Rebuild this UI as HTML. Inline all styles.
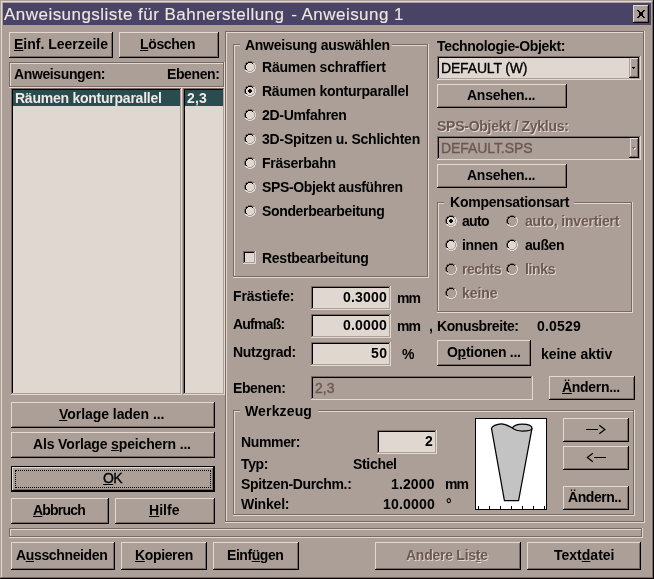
<!DOCTYPE html>
<html lang="de"><head><meta charset="utf-8"><title>Anweisungsliste für Bahnerstellung - Anweisung 1</title>
<style>
html,body{margin:0;padding:0}
body{width:654px;height:579px;background:#ab9f97;position:relative;overflow:hidden;font-family:"Liberation Sans",sans-serif;}
body>div,body>svg{position:absolute;box-sizing:border-box}
.t{will-change:transform;font-weight:bold;font-size:14px;line-height:16px;height:16px;white-space:nowrap;color:#000}
.t.n{font-weight:normal;-webkit-text-stroke:0.35px currentColor}
.t.w{color:#f2eae2}
.t.ti{-webkit-text-stroke:0.12px currentColor;color:#f0e8e0;line-height:20px;height:20px}
.t.dd{color:#6c5852}
.t.dl{color:#e2dad2}
.t u{text-decoration:underline;text-underline-offset:1px;text-decoration-thickness:1px}
.btn{background:#ab9f97;box-shadow:inset -1px -1px 0 #000,inset 1px 1px 0 #e2dad2,inset -2px -2px 0 #7a6862}
.btn.b2{box-shadow:inset -1px -1px 0 #000,inset 1px 0 0 #ab9f97,inset 0 1px 0 #e2dad2,inset -2px -2px 0 #7a6862,inset 2px 0 0 #e2dad2}
.btn.def{box-shadow:inset 0 0 0 1px #000,inset -2px -2px 0 #000,inset 2px 2px 0 #e2dad2,inset -3px -3px 0 #7a6862}
.et{box-shadow:inset -1px -1px 0 #e2dad2,inset 1px 1px 0 #7a6862,inset -2px -2px 0 #7a6862,inset 2px 2px 0 #e2dad2}
.sk{box-shadow:inset -1px -1px 0 #e2dad2,inset 1px 1px 0 #7a6862,inset -2px -2px 0 #ab9f97,inset 2px 2px 0 #000}
.focus{border:1px dotted #000}
</style></head>
<body>
<div style="left:1px;top:1px;width:652px;height:1px;background:#e2dad2;"></div>
<div style="left:1px;top:1px;width:1px;height:577px;background:#e2dad2;"></div>
<div style="left:652px;top:1px;width:1px;height:577px;background:#7a6862;"></div>
<div style="left:1px;top:577px;width:652px;height:1px;background:#7a6862;"></div>
<div style="left:653px;top:0px;width:1px;height:579px;background:#000;"></div>
<div style="left:0px;top:578px;width:654px;height:1px;background:#000;"></div>
<div style="left:3px;top:3px;width:648px;height:22px;background:#494366;"></div>
<div class="t n ti" style="left:4px;top:5px;letter-spacing:0.466px;font-size:17px;">Anweisungsliste für Bahnerstellung <span style="margin-left:1.5px">- Anweisung 1</span></div>
<div class="btn" style="left:633px;top:5px;width:16px;height:18px"></div>
<svg style="left:637px;top:10px" width="8" height="8" viewBox="0 0 8 8" shape-rendering="crispEdges"><path d="M0 0h2v1h-2zM6 0h2v1h-2zM1 1h2v1h-2zM5 1h2v1h-2zM2 2h4v4h-4zM1 6h2v1h-2zM5 6h2v1h-2zM0 7h2v1h-2zM6 7h2v1h-2z" fill="#000"/></svg>
<div class="btn" style="left:9px;top:32px;width:104px;height:26px"></div>
<div class="t " style="left:14px;top:36px;letter-spacing:-0.011px;"><u>E</u>inf. Leerzeile</div>
<div class="btn" style="left:119px;top:32px;width:100px;height:26px"></div>
<div class="t " style="left:140px;top:36px;letter-spacing:-0.346px;"><u>L</u>öschen</div>
<div class="et" style="left:9px;top:62px;width:216px;height:26px"></div>
<div class="t " style="left:14px;top:66px;letter-spacing:-0.379px;">Anweisungen:</div>
<div class="t " style="left:167px;top:66px;letter-spacing:-0.389px;">Ebenen:</div>
<div class="sk" style="left:11px;top:88px;width:171px;height:307px;background:#e0d8d0"></div>
<div class="sk" style="left:183px;top:88px;width:42px;height:307px;background:#e0d8d0"></div>
<div style="left:13px;top:90px;width:167px;height:16px;background:#284c50;"></div>
<div style="left:185px;top:90px;width:38px;height:16px;background:#284c50;"></div>
<div class="t w" style="left:15px;top:90px;letter-spacing:-0.240px;">Räumen konturparallel</div>
<div class="t w" style="left:187px;top:90px;letter-spacing:0.216px;">2,3</div>
<div class="btn" style="left:11px;top:402px;width:204px;height:26px"></div>
<div class="t " style="left:59px;top:406px;letter-spacing:-0.052px;"><u>V</u>orlage laden ...</div>
<div class="btn" style="left:11px;top:432px;width:204px;height:26px"></div>
<div class="t " style="left:33px;top:436px;letter-spacing:-0.149px;">Als Vorlage <u>s</u>peichern ...</div>
<div class="btn def" style="left:11px;top:466px;width:204px;height:26px"></div>
<div class="t n" style="left:103px;top:470px;letter-spacing:-0.734px;"><u>O</u>K</div>
<div class="focus" style="left:15px;top:470px;width:196px;height:18px"></div>
<div class="btn" style="left:11px;top:498px;width:98px;height:26px"></div>
<div class="t " style="left:33px;top:502px;letter-spacing:-0.794px;"><u>A</u>bbruch</div>
<div class="btn" style="left:115px;top:498px;width:100px;height:26px"></div>
<div class="t " style="left:149px;top:502px;letter-spacing:0.039px;"><u>H</u>ilfe</div>
<div class="et" style="left:9px;top:528px;width:634px;height:10px"></div>
<div class="btn" style="left:11px;top:542px;width:104px;height:28px"></div>
<div class="t " style="left:16px;top:547px;letter-spacing:-0.355px;">A<u>u</u>sschneiden</div>
<div class="btn" style="left:121px;top:542px;width:86px;height:28px"></div>
<div class="t " style="left:135px;top:547px;letter-spacing:-0.355px;"><u>K</u>opieren</div>
<div class="btn" style="left:213px;top:542px;width:86px;height:28px"></div>
<div class="t " style="left:227px;top:547px;letter-spacing:-0.427px;">Einf<u>ü</u>gen</div>
<div class="btn" style="left:375px;top:542px;width:146px;height:28px"></div>
<div class="t dl" style="left:407.3px;top:548px;letter-spacing:-0.256px;">Andere Lis<u>t</u>e</div>
<div class="t dd" style="left:406.3px;top:547px;letter-spacing:-0.256px;">Andere Lis<u>t</u>e</div>
<div class="btn" style="left:527px;top:542px;width:114px;height:28px"></div>
<div class="t " style="left:553.6px;top:547px;letter-spacing:0.008px;">Text<u>d</u>atei</div>
<div class="et" style="left:225px;top:31px;width:420px;height:492px"></div>
<div class="et" style="left:233px;top:44px;width:196px;height:234px"></div>
<div style="left:240px;top:44px;width:152px;height:2px;background:#ab9f97;"></div>
<div class="t " style="left:245px;top:37px;letter-spacing:-0.286px;">Anweisung auswählen</div>
<svg class="rd" style="left:244px;top:61px" width="12" height="12" viewBox="0 0 12 12" shape-rendering="crispEdges">
<path d="M4 0h4v1h2v1h1v2h1v4h-1v2h-1v1h-2v1h-4v-1h-2v-1h-1v-2h-1v-4h1v-2h1v-1h2z" fill="#e0d8d0"/>
<path d="M4 0h4v1h-4zM2 1h2v1h-2zM8 1h2v1h-2zM1 2h1v2h-1zM0 4h1v4h-1zM1 8h1v1h-1z" fill="#7a6862"/>
<path d="M4 1h4v1h-4zM2 2h2v1h-2zM8 2h1v1h-1zM2 3h1v1h-1zM1 4h1v4h-1zM2 8h1v1h-1z" fill="#000"/>
<path d="M10 2h1v2h-1zM11 4h1v4h-1zM10 8h1v2h-1zM8 10h2v1h-2zM4 11h4v1h-4zM2 10h2v1h-2zM1 9h1v1h-1z" fill="#e2dad2"/>
<path d="M9 3h1v1h-1zM10 4h1v4h-1zM9 8h1v1h-1zM8 9h1v1h-1zM4 10h4v1h-4zM3 9h1v1h-1z" fill="#ab9f97"/>
</svg>
<div class="t " style="left:262px;top:59px;letter-spacing:-0.223px;">Räumen schraffiert</div>
<svg class="rd" style="left:244px;top:85px" width="12" height="12" viewBox="0 0 12 12" shape-rendering="crispEdges">
<path d="M4 0h4v1h2v1h1v2h1v4h-1v2h-1v1h-2v1h-4v-1h-2v-1h-1v-2h-1v-4h1v-2h1v-1h2z" fill="#e0d8d0"/>
<path d="M4 0h4v1h-4zM2 1h2v1h-2zM8 1h2v1h-2zM1 2h1v2h-1zM0 4h1v4h-1zM1 8h1v1h-1z" fill="#7a6862"/>
<path d="M4 1h4v1h-4zM2 2h2v1h-2zM8 2h1v1h-1zM2 3h1v1h-1zM1 4h1v4h-1zM2 8h1v1h-1z" fill="#000"/>
<path d="M10 2h1v2h-1zM11 4h1v4h-1zM10 8h1v2h-1zM8 10h2v1h-2zM4 11h4v1h-4zM2 10h2v1h-2zM1 9h1v1h-1z" fill="#e2dad2"/>
<path d="M9 3h1v1h-1zM10 4h1v4h-1zM9 8h1v1h-1zM8 9h1v1h-1zM4 10h4v1h-4zM3 9h1v1h-1z" fill="#ab9f97"/>
<path d="M5 4h2v1h1v2h-1v1h-2v-1h-1v-2h1z" fill="#000"/></svg>
<div class="t " style="left:262px;top:83px;letter-spacing:-0.240px;">Räumen konturparallel</div>
<svg class="rd" style="left:244px;top:109px" width="12" height="12" viewBox="0 0 12 12" shape-rendering="crispEdges">
<path d="M4 0h4v1h2v1h1v2h1v4h-1v2h-1v1h-2v1h-4v-1h-2v-1h-1v-2h-1v-4h1v-2h1v-1h2z" fill="#e0d8d0"/>
<path d="M4 0h4v1h-4zM2 1h2v1h-2zM8 1h2v1h-2zM1 2h1v2h-1zM0 4h1v4h-1zM1 8h1v1h-1z" fill="#7a6862"/>
<path d="M4 1h4v1h-4zM2 2h2v1h-2zM8 2h1v1h-1zM2 3h1v1h-1zM1 4h1v4h-1zM2 8h1v1h-1z" fill="#000"/>
<path d="M10 2h1v2h-1zM11 4h1v4h-1zM10 8h1v2h-1zM8 10h2v1h-2zM4 11h4v1h-4zM2 10h2v1h-2zM1 9h1v1h-1z" fill="#e2dad2"/>
<path d="M9 3h1v1h-1zM10 4h1v4h-1zM9 8h1v1h-1zM8 9h1v1h-1zM4 10h4v1h-4zM3 9h1v1h-1z" fill="#ab9f97"/>
</svg>
<div class="t " style="left:262px;top:107px;letter-spacing:-0.301px;">2D-Umfahren</div>
<svg class="rd" style="left:244px;top:133px" width="12" height="12" viewBox="0 0 12 12" shape-rendering="crispEdges">
<path d="M4 0h4v1h2v1h1v2h1v4h-1v2h-1v1h-2v1h-4v-1h-2v-1h-1v-2h-1v-4h1v-2h1v-1h2z" fill="#e0d8d0"/>
<path d="M4 0h4v1h-4zM2 1h2v1h-2zM8 1h2v1h-2zM1 2h1v2h-1zM0 4h1v4h-1zM1 8h1v1h-1z" fill="#7a6862"/>
<path d="M4 1h4v1h-4zM2 2h2v1h-2zM8 2h1v1h-1zM2 3h1v1h-1zM1 4h1v4h-1zM2 8h1v1h-1z" fill="#000"/>
<path d="M10 2h1v2h-1zM11 4h1v4h-1zM10 8h1v2h-1zM8 10h2v1h-2zM4 11h4v1h-4zM2 10h2v1h-2zM1 9h1v1h-1z" fill="#e2dad2"/>
<path d="M9 3h1v1h-1zM10 4h1v4h-1zM9 8h1v1h-1zM8 9h1v1h-1zM4 10h4v1h-4zM3 9h1v1h-1z" fill="#ab9f97"/>
</svg>
<div class="t " style="left:262px;top:131px;letter-spacing:-0.224px;">3D-Spitzen u. Schlichten</div>
<svg class="rd" style="left:244px;top:157px" width="12" height="12" viewBox="0 0 12 12" shape-rendering="crispEdges">
<path d="M4 0h4v1h2v1h1v2h1v4h-1v2h-1v1h-2v1h-4v-1h-2v-1h-1v-2h-1v-4h1v-2h1v-1h2z" fill="#e0d8d0"/>
<path d="M4 0h4v1h-4zM2 1h2v1h-2zM8 1h2v1h-2zM1 2h1v2h-1zM0 4h1v4h-1zM1 8h1v1h-1z" fill="#7a6862"/>
<path d="M4 1h4v1h-4zM2 2h2v1h-2zM8 2h1v1h-1zM2 3h1v1h-1zM1 4h1v4h-1zM2 8h1v1h-1z" fill="#000"/>
<path d="M10 2h1v2h-1zM11 4h1v4h-1zM10 8h1v2h-1zM8 10h2v1h-2zM4 11h4v1h-4zM2 10h2v1h-2zM1 9h1v1h-1z" fill="#e2dad2"/>
<path d="M9 3h1v1h-1zM10 4h1v4h-1zM9 8h1v1h-1zM8 9h1v1h-1zM4 10h4v1h-4zM3 9h1v1h-1z" fill="#ab9f97"/>
</svg>
<div class="t " style="left:262px;top:155px;letter-spacing:-0.250px;">Fräserbahn</div>
<svg class="rd" style="left:244px;top:181px" width="12" height="12" viewBox="0 0 12 12" shape-rendering="crispEdges">
<path d="M4 0h4v1h2v1h1v2h1v4h-1v2h-1v1h-2v1h-4v-1h-2v-1h-1v-2h-1v-4h1v-2h1v-1h2z" fill="#e0d8d0"/>
<path d="M4 0h4v1h-4zM2 1h2v1h-2zM8 1h2v1h-2zM1 2h1v2h-1zM0 4h1v4h-1zM1 8h1v1h-1z" fill="#7a6862"/>
<path d="M4 1h4v1h-4zM2 2h2v1h-2zM8 2h1v1h-1zM2 3h1v1h-1zM1 4h1v4h-1zM2 8h1v1h-1z" fill="#000"/>
<path d="M10 2h1v2h-1zM11 4h1v4h-1zM10 8h1v2h-1zM8 10h2v1h-2zM4 11h4v1h-4zM2 10h2v1h-2zM1 9h1v1h-1z" fill="#e2dad2"/>
<path d="M9 3h1v1h-1zM10 4h1v4h-1zM9 8h1v1h-1zM8 9h1v1h-1zM4 10h4v1h-4zM3 9h1v1h-1z" fill="#ab9f97"/>
</svg>
<div class="t " style="left:262px;top:179px;letter-spacing:-0.353px;">SPS-Objekt ausführen</div>
<svg class="rd" style="left:244px;top:205px" width="12" height="12" viewBox="0 0 12 12" shape-rendering="crispEdges">
<path d="M4 0h4v1h2v1h1v2h1v4h-1v2h-1v1h-2v1h-4v-1h-2v-1h-1v-2h-1v-4h1v-2h1v-1h2z" fill="#e0d8d0"/>
<path d="M4 0h4v1h-4zM2 1h2v1h-2zM8 1h2v1h-2zM1 2h1v2h-1zM0 4h1v4h-1zM1 8h1v1h-1z" fill="#7a6862"/>
<path d="M4 1h4v1h-4zM2 2h2v1h-2zM8 2h1v1h-1zM2 3h1v1h-1zM1 4h1v4h-1zM2 8h1v1h-1z" fill="#000"/>
<path d="M10 2h1v2h-1zM11 4h1v4h-1zM10 8h1v2h-1zM8 10h2v1h-2zM4 11h4v1h-4zM2 10h2v1h-2zM1 9h1v1h-1z" fill="#e2dad2"/>
<path d="M9 3h1v1h-1zM10 4h1v4h-1zM9 8h1v1h-1zM8 9h1v1h-1zM4 10h4v1h-4zM3 9h1v1h-1z" fill="#ab9f97"/>
</svg>
<div class="t " style="left:262px;top:203px;letter-spacing:-0.347px;">Sonderbearbeitung</div>
<div class="sk" style="left:243px;top:251px;width:13px;height:13px;background:#e0d8d0"></div>
<div class="t " style="left:262px;top:250px;letter-spacing:-0.262px;">Restbearbeitung</div>
<div class="t " style="left:437px;top:38px;letter-spacing:-0.323px;">Technologie-Objekt:</div>
<div class="sk" style="left:437px;top:56px;width:204px;height:24px;background:#e0d8d0"></div>
<div class="t n" style="left:441px;top:60px;letter-spacing:-0.166px;">DEFAULT (W)</div>
<div class="btn b2" style="left:629px;top:58px;width:10px;height:20px"></div>
<div style="left:632px;top:67px;width:3px;height:1px;background:#000;"></div>
<div style="left:633px;top:68px;width:1px;height:1px;background:#000;"></div>
<div class="btn" style="left:437px;top:84px;width:130px;height:24px"></div>
<div class="t " style="left:467px;top:87px;letter-spacing:-0.255px;">Ansehen...</div>
<div class="t dl" style="left:438px;top:119px;letter-spacing:-0.260px;">SPS-Objekt / Zyklus:</div>
<div class="t dd" style="left:437px;top:118px;letter-spacing:-0.260px;">SPS-Objekt / Zyklus:</div>
<div class="sk" style="left:437px;top:136px;width:204px;height:24px;background:#ab9f97"></div>
<div class="t n dd" style="left:441px;top:140px;letter-spacing:-0.083px;">DEFAULT.SPS</div>
<div class="btn b2" style="left:629px;top:138px;width:10px;height:20px"></div>
<div style="left:633px;top:148px;width:3px;height:1px;background:#e2dad2;"></div>
<div style="left:634px;top:149px;width:1px;height:1px;background:#e2dad2;"></div>
<div style="left:632px;top:147px;width:3px;height:1px;background:#7a6862;"></div>
<div style="left:633px;top:148px;width:1px;height:1px;background:#7a6862;"></div>
<div class="btn" style="left:437px;top:164px;width:130px;height:24px"></div>
<div class="t " style="left:467px;top:167px;letter-spacing:-0.255px;">Ansehen...</div>
<div class="et" style="left:437px;top:202px;width:196px;height:111px"></div>
<div style="left:444px;top:202px;width:130px;height:2px;background:#ab9f97;"></div>
<div class="t " style="left:449.5px;top:194px;letter-spacing:-0.228px;">Kompensationsart</div>
<svg class="rd" style="left:445px;top:215px" width="12" height="12" viewBox="0 0 12 12" shape-rendering="crispEdges">
<path d="M4 0h4v1h2v1h1v2h1v4h-1v2h-1v1h-2v1h-4v-1h-2v-1h-1v-2h-1v-4h1v-2h1v-1h2z" fill="#e0d8d0"/>
<path d="M4 0h4v1h-4zM2 1h2v1h-2zM8 1h2v1h-2zM1 2h1v2h-1zM0 4h1v4h-1zM1 8h1v1h-1z" fill="#7a6862"/>
<path d="M4 1h4v1h-4zM2 2h2v1h-2zM8 2h1v1h-1zM2 3h1v1h-1zM1 4h1v4h-1zM2 8h1v1h-1z" fill="#000"/>
<path d="M10 2h1v2h-1zM11 4h1v4h-1zM10 8h1v2h-1zM8 10h2v1h-2zM4 11h4v1h-4zM2 10h2v1h-2zM1 9h1v1h-1z" fill="#e2dad2"/>
<path d="M9 3h1v1h-1zM10 4h1v4h-1zM9 8h1v1h-1zM8 9h1v1h-1zM4 10h4v1h-4zM3 9h1v1h-1z" fill="#ab9f97"/>
<path d="M5 4h2v1h1v2h-1v1h-2v-1h-1v-2h1z" fill="#000"/></svg>
<div class="t " style="left:462px;top:213px;letter-spacing:-0.688px;">auto</div>
<svg class="rd" style="left:506px;top:215px" width="12" height="12" viewBox="0 0 12 12" shape-rendering="crispEdges">
<path d="M4 0h4v1h2v1h1v2h1v4h-1v2h-1v1h-2v1h-4v-1h-2v-1h-1v-2h-1v-4h1v-2h1v-1h2z" fill="#ab9f97"/>
<path d="M4 0h4v1h-4zM2 1h2v1h-2zM8 1h2v1h-2zM1 2h1v2h-1zM0 4h1v4h-1zM1 8h1v1h-1z" fill="#7a6862"/>
<path d="M4 1h4v1h-4zM2 2h2v1h-2zM8 2h1v1h-1zM2 3h1v1h-1zM1 4h1v4h-1zM2 8h1v1h-1z" fill="#000"/>
<path d="M10 2h1v2h-1zM11 4h1v4h-1zM10 8h1v2h-1zM8 10h2v1h-2zM4 11h4v1h-4zM2 10h2v1h-2zM1 9h1v1h-1z" fill="#e2dad2"/>
<path d="M9 3h1v1h-1zM10 4h1v4h-1zM9 8h1v1h-1zM8 9h1v1h-1zM4 10h4v1h-4zM3 9h1v1h-1z" fill="#ab9f97"/>
</svg>
<div class="t dl" style="left:525.5px;top:214px;letter-spacing:-0.183px;">auto, invertiert</div>
<div class="t dd" style="left:524.5px;top:213px;letter-spacing:-0.183px;">auto, invertiert</div>
<svg class="rd" style="left:445px;top:239px" width="12" height="12" viewBox="0 0 12 12" shape-rendering="crispEdges">
<path d="M4 0h4v1h2v1h1v2h1v4h-1v2h-1v1h-2v1h-4v-1h-2v-1h-1v-2h-1v-4h1v-2h1v-1h2z" fill="#e0d8d0"/>
<path d="M4 0h4v1h-4zM2 1h2v1h-2zM8 1h2v1h-2zM1 2h1v2h-1zM0 4h1v4h-1zM1 8h1v1h-1z" fill="#7a6862"/>
<path d="M4 1h4v1h-4zM2 2h2v1h-2zM8 2h1v1h-1zM2 3h1v1h-1zM1 4h1v4h-1zM2 8h1v1h-1z" fill="#000"/>
<path d="M10 2h1v2h-1zM11 4h1v4h-1zM10 8h1v2h-1zM8 10h2v1h-2zM4 11h4v1h-4zM2 10h2v1h-2zM1 9h1v1h-1z" fill="#e2dad2"/>
<path d="M9 3h1v1h-1zM10 4h1v4h-1zM9 8h1v1h-1zM8 9h1v1h-1zM4 10h4v1h-4zM3 9h1v1h-1z" fill="#ab9f97"/>
</svg>
<div class="t " style="left:462px;top:237px;letter-spacing:-0.336px;">innen</div>
<svg class="rd" style="left:506px;top:239px" width="12" height="12" viewBox="0 0 12 12" shape-rendering="crispEdges">
<path d="M4 0h4v1h2v1h1v2h1v4h-1v2h-1v1h-2v1h-4v-1h-2v-1h-1v-2h-1v-4h1v-2h1v-1h2z" fill="#e0d8d0"/>
<path d="M4 0h4v1h-4zM2 1h2v1h-2zM8 1h2v1h-2zM1 2h1v2h-1zM0 4h1v4h-1zM1 8h1v1h-1z" fill="#7a6862"/>
<path d="M4 1h4v1h-4zM2 2h2v1h-2zM8 2h1v1h-1zM2 3h1v1h-1zM1 4h1v4h-1zM2 8h1v1h-1z" fill="#000"/>
<path d="M10 2h1v2h-1zM11 4h1v4h-1zM10 8h1v2h-1zM8 10h2v1h-2zM4 11h4v1h-4zM2 10h2v1h-2zM1 9h1v1h-1z" fill="#e2dad2"/>
<path d="M9 3h1v1h-1zM10 4h1v4h-1zM9 8h1v1h-1zM8 9h1v1h-1zM4 10h4v1h-4zM3 9h1v1h-1z" fill="#ab9f97"/>
</svg>
<div class="t " style="left:524.5px;top:237px;letter-spacing:-0.434px;">außen</div>
<svg class="rd" style="left:445px;top:263px" width="12" height="12" viewBox="0 0 12 12" shape-rendering="crispEdges">
<path d="M4 0h4v1h2v1h1v2h1v4h-1v2h-1v1h-2v1h-4v-1h-2v-1h-1v-2h-1v-4h1v-2h1v-1h2z" fill="#ab9f97"/>
<path d="M4 0h4v1h-4zM2 1h2v1h-2zM8 1h2v1h-2zM1 2h1v2h-1zM0 4h1v4h-1zM1 8h1v1h-1z" fill="#7a6862"/>
<path d="M4 1h4v1h-4zM2 2h2v1h-2zM8 2h1v1h-1zM2 3h1v1h-1zM1 4h1v4h-1zM2 8h1v1h-1z" fill="#000"/>
<path d="M10 2h1v2h-1zM11 4h1v4h-1zM10 8h1v2h-1zM8 10h2v1h-2zM4 11h4v1h-4zM2 10h2v1h-2zM1 9h1v1h-1z" fill="#e2dad2"/>
<path d="M9 3h1v1h-1zM10 4h1v4h-1zM9 8h1v1h-1zM8 9h1v1h-1zM4 10h4v1h-4zM3 9h1v1h-1z" fill="#ab9f97"/>
</svg>
<div class="t dl" style="left:463px;top:262px;letter-spacing:-0.506px;">rechts</div>
<div class="t dd" style="left:462px;top:261px;letter-spacing:-0.506px;">rechts</div>
<svg class="rd" style="left:506px;top:263px" width="12" height="12" viewBox="0 0 12 12" shape-rendering="crispEdges">
<path d="M4 0h4v1h2v1h1v2h1v4h-1v2h-1v1h-2v1h-4v-1h-2v-1h-1v-2h-1v-4h1v-2h1v-1h2z" fill="#ab9f97"/>
<path d="M4 0h4v1h-4zM2 1h2v1h-2zM8 1h2v1h-2zM1 2h1v2h-1zM0 4h1v4h-1zM1 8h1v1h-1z" fill="#7a6862"/>
<path d="M4 1h4v1h-4zM2 2h2v1h-2zM8 2h1v1h-1zM2 3h1v1h-1zM1 4h1v4h-1zM2 8h1v1h-1z" fill="#000"/>
<path d="M10 2h1v2h-1zM11 4h1v4h-1zM10 8h1v2h-1zM8 10h2v1h-2zM4 11h4v1h-4zM2 10h2v1h-2zM1 9h1v1h-1z" fill="#e2dad2"/>
<path d="M9 3h1v1h-1zM10 4h1v4h-1zM9 8h1v1h-1zM8 9h1v1h-1zM4 10h4v1h-4zM3 9h1v1h-1z" fill="#ab9f97"/>
</svg>
<div class="t dl" style="left:525.5px;top:262px;letter-spacing:-0.352px;">links</div>
<div class="t dd" style="left:524.5px;top:261px;letter-spacing:-0.352px;">links</div>
<svg class="rd" style="left:445px;top:287px" width="12" height="12" viewBox="0 0 12 12" shape-rendering="crispEdges">
<path d="M4 0h4v1h2v1h1v2h1v4h-1v2h-1v1h-2v1h-4v-1h-2v-1h-1v-2h-1v-4h1v-2h1v-1h2z" fill="#ab9f97"/>
<path d="M4 0h4v1h-4zM2 1h2v1h-2zM8 1h2v1h-2zM1 2h1v2h-1zM0 4h1v4h-1zM1 8h1v1h-1z" fill="#7a6862"/>
<path d="M4 1h4v1h-4zM2 2h2v1h-2zM8 2h1v1h-1zM2 3h1v1h-1zM1 4h1v4h-1zM2 8h1v1h-1z" fill="#000"/>
<path d="M10 2h1v2h-1zM11 4h1v4h-1zM10 8h1v2h-1zM8 10h2v1h-2zM4 11h4v1h-4zM2 10h2v1h-2zM1 9h1v1h-1z" fill="#e2dad2"/>
<path d="M9 3h1v1h-1zM10 4h1v4h-1zM9 8h1v1h-1zM8 9h1v1h-1zM4 10h4v1h-4zM3 9h1v1h-1z" fill="#ab9f97"/>
</svg>
<div class="t dl" style="left:463px;top:286px;letter-spacing:-0.078px;">keine</div>
<div class="t dd" style="left:462px;top:285px;letter-spacing:-0.078px;">keine</div>
<div class="t " style="left:233px;top:288px;letter-spacing:-0.170px;">Frästiefe:</div>
<div class="t " style="left:233px;top:316px;letter-spacing:-0.780px;">Aufmaß:</div>
<div class="t " style="left:233px;top:344px;letter-spacing:-0.279px;">Nutzgrad:</div>
<div class="sk" style="left:311px;top:286px;width:80px;height:24px;background:#e0d8d0"></div>
<div class="sk" style="left:311px;top:314px;width:80px;height:24px;background:#e0d8d0"></div>
<div class="sk" style="left:311px;top:342px;width:80px;height:24px;background:#e0d8d0"></div>
<div class="t " style="left:343px;top:289px;letter-spacing:0.174px;">0.3000</div>
<div class="t " style="left:343px;top:317px;letter-spacing:0.174px;">0.0000</div>
<div class="t " style="left:370.6px;top:345px;letter-spacing:0.522px;">50</div>
<div class="t " style="left:397px;top:290px;letter-spacing:-1.006px;">mm</div>
<div class="t " style="left:397px;top:318px;letter-spacing:-1.006px;">mm</div>
<div class="t " style="left:402px;top:346px;letter-spacing:0.547px;">%</div>
<div class="t " style="left:428.8px;top:318px;">,</div>
<div class="t " style="left:437.3px;top:318px;letter-spacing:-0.395px;">Konusbreite:</div>
<div class="t " style="left:536.7px;top:318px;letter-spacing:0.214px;">0.0529</div>
<div class="btn" style="left:437px;top:340px;width:94px;height:26px"></div>
<div class="t " style="left:446.8px;top:344px;letter-spacing:-0.282px;">O<u>p</u>tionen ...</div>
<div class="t " style="left:540.5px;top:346px;letter-spacing:-0.041px;">keine aktiv</div>
<div class="t " style="left:233px;top:380px;letter-spacing:-0.389px;">Ebenen:</div>
<div class="sk" style="left:311px;top:376px;width:222px;height:24px;background:#ab9f97"></div>
<div class="t n dd" style="left:315px;top:380px;letter-spacing:0.016px;">2,3</div>
<div class="btn" style="left:549px;top:376px;width:86px;height:24px"></div>
<div class="t " style="left:561.6px;top:379px;letter-spacing:-0.309px;"><u>Ä</u>ndern...</div>
<div class="et" style="left:233px;top:410px;width:402px;height:106px"></div>
<div style="left:240px;top:410px;width:78px;height:2px;background:#ab9f97;"></div>
<div class="t " style="left:245px;top:403px;letter-spacing:0.146px;">Werkzeug</div>
<div class="t " style="left:241px;top:434px;letter-spacing:-0.345px;">Nummer:</div>
<div class="sk" style="left:377px;top:430px;width:60px;height:24px;background:#e0d8d0"></div>
<div class="t " style="left:424.5px;top:433px;letter-spacing:0.703px;">2</div>
<div class="t " style="left:241px;top:456px;letter-spacing:-0.339px;">Typ:</div>
<div class="t " style="left:353px;top:456px;letter-spacing:-0.318px;">Stichel</div>
<div class="t " style="left:241px;top:476px;letter-spacing:-0.339px;">Spitzen-Durchm.:</div>
<div class="t " style="left:391.2px;top:476px;letter-spacing:0.134px;">1.2000</div>
<div class="t " style="left:445px;top:476px;letter-spacing:-1.006px;">mm</div>
<div class="t " style="left:241px;top:496px;letter-spacing:-0.193px;">Winkel:</div>
<div class="t " style="left:382.8px;top:496px;letter-spacing:0.215px;">10.0000</div>
<div class="t " style="left:446px;top:496px;">°</div>
<svg style="left:475px;top:418px" width="72" height="92" viewBox="0 0 72 92">
<rect x="0.5" y="0.5" width="71" height="91" fill="#fff" stroke="#000" stroke-width="1"/>
<path d="M3.5 88v3M14.5 88v3M25.5 88v3M36.5 88v3M47.5 88v3M58.5 88v3M69.5 88v3" stroke="#000" stroke-width="1" shape-rendering="crispEdges"/>
<path d="M16.5 10.3 C16.8 8.6 21.5 5.8 26.5 5.8 C30.8 5.8 33.8 8.2 37.3 9.9 C39 7.4 43 6 47.2 6 C52.6 6 57 7.6 57 10.2 L43.6 82.5 L29.4 82.5 Z" fill="#c3c3c3" stroke="#000" stroke-width="1.25" stroke-linejoin="round"/>
<path d="M37.3 9.9 C39.5 11.8 43 13 47.2 13 C52.6 13 57 12 57 10.2" fill="none" stroke="#000" stroke-width="1.25"/>
</svg>
<div class="btn" style="left:563px;top:418px;width:66px;height:24px"></div>
<div class="btn" style="left:563px;top:446px;width:66px;height:24px"></div>
<svg style="left:586px;top:424px" width="21" height="11" viewBox="0 0 21 11"><path d="M0 5.5H12M13.3 1.2L18.9 5.5L13.3 9.8" fill="none" stroke="#000" stroke-width="1.2"/></svg>
<svg style="left:586px;top:452px" width="21" height="11" viewBox="0 0 21 11"><path d="M20 5.5H8M6.9 1.2L1.3 5.5L6.9 9.8" fill="none" stroke="#000" stroke-width="1.2"/></svg>
<div class="btn" style="left:563px;top:486px;width:66px;height:24px"></div>
<div class="t " style="left:568.3px;top:489px;letter-spacing:-0.440px;">Ändern..</div>
</body></html>
